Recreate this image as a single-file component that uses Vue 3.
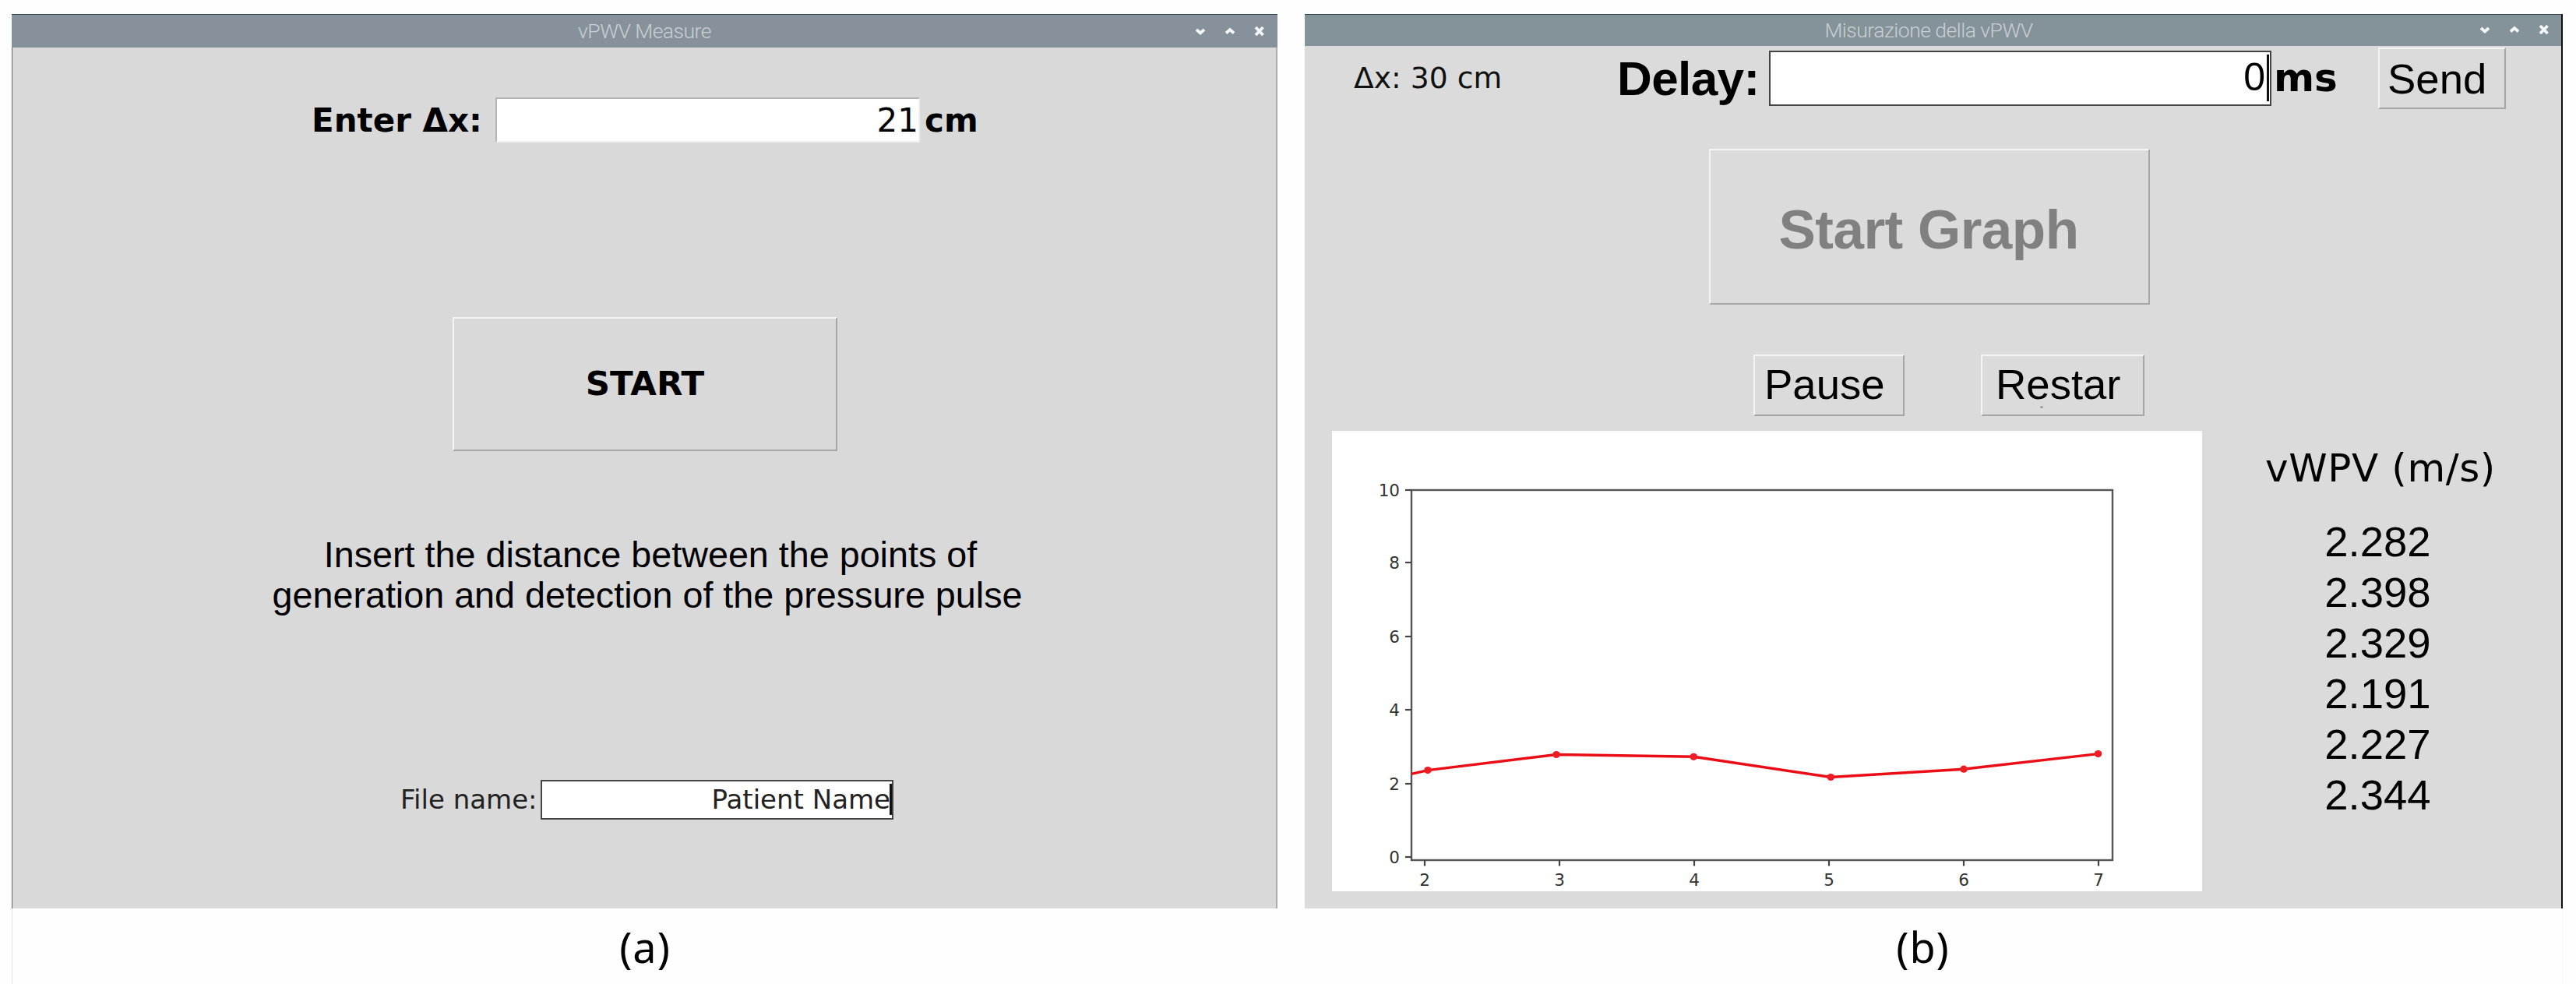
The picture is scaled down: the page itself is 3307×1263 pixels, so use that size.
<script setup>
const readings = ['2.282', '2.398', '2.329', '2.191', '2.227', '2.344']

const yTicks = [
  { label: '10', y: 76 },
  { label: '8', y: 169 },
  { label: '6', y: 264 },
  { label: '4', y: 358 },
  { label: '2', y: 453 },
  { label: '0', y: 547 }
]

const xTicks = [
  { label: '2', x: 119 },
  { label: '3', x: 292 },
  { label: '4', x: 465 },
  { label: '5', x: 638 },
  { label: '6', x: 811 },
  { label: '7', x: 984 }
]

const points = [
  [123, 435.6],
  [288, 415.5],
  [464.3, 418.3],
  [640.3, 444.5],
  [811, 434.2],
  [983.5, 414.6]
]
const line = [[102, 440.3], ...points].map((p) => p.join(',')).join(' ')
</script>

<template>
  <main class="page">
    <figure class="panel panel-a">
      <section class="window">
        <header class="titlebar">
          <span class="title">vPWV Measure</span>
          <svg class="controls" width="92" height="16" viewBox="0 0 92 16">
            <path d="M3 6 L8 10.5 L13 6 M41 10.5 L46 6 L51 10.5" />
            <path d="M79 3 L88.5 13 M88.5 3 L79 13" />
          </svg>
        </header>
        <div class="body">
          <div class="distance-row">
            <label class="bold-label">Enter Δx:</label>
            <div class="field sunken">21</div>
            <span class="bold-label unit">cm</span>
          </div>
          <button class="raised start">START</button>
          <p class="hint">
            <span class="hint-first">Insert the distance between the points of</span>
            <span>generation and detection of the pressure pulse</span>
          </p>
          <div class="file-row">
            <label>File name:</label>
            <div class="field focused">Patient Name<i class="caret"></i></div>
          </div>
        </div>
      </section>
      <figcaption>(a)</figcaption>
    </figure>

    <figure class="panel panel-b">
      <section class="window">
        <header class="titlebar">
          <span class="title">Misurazione della vPWV</span>
          <svg class="controls" width="92" height="16" viewBox="0 0 92 16">
            <path d="M3 6 L8 10.5 L13 6 M41 10.5 L46 6 L51 10.5" />
            <path d="M79 3 L88.5 13 M88.5 3 L79 13" />
          </svg>
        </header>
        <div class="body">
          <div class="delay-row">
            <span class="dx">Δx: 30 cm</span>
            <label class="delay">Delay:</label>
            <div class="field focused delay-field">0<i class="caret"></i></div>
            <span class="ms">ms</span>
            <button class="raised send">Send</button>
          </div>
          <button class="raised graph">Start Graph</button>
          <div class="actions">
            <button class="raised pause">Pause</button>
            <button class="raised restart">Restar<i class="speck"></i></button>
          </div>
          <div class="results">
            <svg class="chart" width="1117" height="591" viewBox="0 0 1117 591">
              <rect class="frame" x="102" y="76" width="900" height="475" />
              <g v-for="t in yTicks" :key="'y' + t.label">
                <line class="tick" x1="94" x2="102" :y1="t.y" :y2="t.y" />
                <text x="87" :y="t.y + 8" text-anchor="end">{{ t.label }}</text>
              </g>
              <g v-for="t in xTicks" :key="'x' + t.label">
                <line class="tick" :x1="t.x" :x2="t.x" y1="551" y2="558.5" />
                <text :x="t.x" y="584" text-anchor="middle">{{ t.label }}</text>
              </g>
              <polyline class="series" :points="line" />
              <ellipse
                v-for="p in points"
                :key="p[0]"
                class="dot"
                :cx="p[0]"
                :cy="p[1]"
                rx="4.8"
                ry="4.6"
              />
            </svg>
            <div class="readings">
              <h2>vWPV (m/s)</h2>
              <ul>
                <li v-for="r in readings" :key="r">{{ r }}</li>
              </ul>
            </div>
          </div>
        </div>
      </section>
      <figcaption>(b)</figcaption>
    </figure>
  </main>
</template>

<style>
body {
  margin: 0;
  background: #fff;
}
</style>

<style scoped>
* {
  box-sizing: border-box;
}
.page {
  display: flex;
  gap: 35px;
  width: 3307px;
  height: 1263px;
  padding: 18px 0 0 15px;
  overflow: hidden;
  background: #fefefe;
  color: #000;
  font-family: "DejaVu Sans", sans-serif;
  white-space: nowrap;
}
.panel {
  display: flex;
  flex-direction: column;
  margin: 0;
}
.panel-a {
  width: 1625px;
}
.panel-b {
  width: 1615px;
}
.window {
  height: 1149px;
  background: #d9d9d9;
}
.panel-a .window {
  border-left: 1px solid #5f666b;
  border-right: 2px solid #acacac;
}
.panel-b .window {
  height: 1148px;
  background: #dbdbdb;
  border-right: 2px solid #0c0f11;
}
figcaption {
  height: 97px;
  padding-top: 3px;
  line-height: 92px;
  font-family: "Noto Sans", sans-serif;
  font-size: 54px;
  letter-spacing: 1px;
  text-align: center;
}
.panel-a figcaption {
  border-left: 1px solid #e2e2e2;
}
.panel-b figcaption {
  padding-right: 27px;
  border-right: 1px solid #f6f6f6;
}

/* title bars */
.titlebar {
  display: grid;
  grid-template-columns: 1fr auto 1fr;
  align-items: center;
  height: 43px;
  border-top: 1px solid #34434c;
  background: #87919b;
}
.panel-a .titlebar {
  margin: 0 -2px 0 -1px;
}
.panel-b .titlebar {
  height: 41px;
  background: #849299;
}
.title {
  grid-column: 2;
  color: #c9cfd3;
  font-family: Roboto, sans-serif;
  font-size: 26.5px;
  font-weight: 300;
  letter-spacing: -0.5px;
  line-height: 40px;
}
.panel-b .title {
  margin-right: 11px;
}
.controls {
  justify-self: end;
  margin-right: 15px;
  fill: none;
  stroke: #f4f6f7;
  stroke-width: 3.8;
}
.panel-b .controls {
  margin-right: 14px;
  margin-top: -2px;
}

/* shared widgets */
button {
  margin: 0;
  padding: 0;
  background: transparent;
  color: #000;
  font-family: inherit;
}
.raised {
  border: 2px solid;
  border-color: #f4f4f4 #a6a6a6 #a6a6a6 #f4f4f4;
}
.field {
  display: flex;
  align-items: center;
  justify-content: flex-end;
  position: relative;
  background: #fff;
}
.sunken {
  border: 2px solid;
  border-color: #b4b4b4 #efefef #efefef #b4b4b4;
}
.focused {
  border: 2.5px solid #444;
}
.caret {
  position: absolute;
  background: #111;
}

/* left window */
.distance-row {
  display: flex;
  align-items: center;
  height: 58px;
  margin: 64px 0 0 384px;
  font-size: 42px;
}
.bold-label {
  width: 236px;
  font-weight: 700;
}
.distance-row .field {
  width: 545px;
  height: 58px;
}
.bold-label.unit {
  width: auto;
  margin-left: 6px;
}
.start {
  display: block;
  width: 494px;
  height: 172px;
  margin: 224px 0 0 565px;
  padding-bottom: 2px;
  font-size: 43.5px;
  font-weight: 700;
}
.hint {
  display: flex;
  flex-direction: column;
  align-items: center;
  width: 1630px;
  margin: 107px 0 0;
  font-family: "Liberation Sans", sans-serif;
  font-size: 46.7px;
  line-height: 52px;
}
.hint-first {
  padding-left: 8px;
}
.file-row {
  display: flex;
  align-items: center;
  height: 51px;
  margin: 211px 0 0 498px;
  color: #222;
  font-size: 34px;
}
.file-row label {
  width: 180px;
  padding-bottom: 2px;
}
.file-row .field {
  width: 453px;
  height: 51px;
  padding: 0 2px 2px 0;
}
.file-row .caret {
  top: 3px;
  right: 0;
  width: 3px;
  height: 40px;
}

/* right window */
.delay-row {
  display: flex;
  align-items: center;
  height: 82px;
  padding-left: 63px;
}
.dx {
  width: 338px;
  color: #111;
  font-size: 37.7px;
}
.delay {
  width: 195px;
  font-family: "Liberation Sans", sans-serif;
  font-size: 62px;
  font-weight: 700;
  letter-spacing: -0.6px;
}
.delay-field {
  width: 645px;
  height: 71px;
  padding: 0 6px 2px 0;
  font-family: "Liberation Sans", sans-serif;
  font-size: 50px;
}
.delay-field .caret {
  top: 3px;
  right: 1px;
  width: 3px;
  height: 60px;
}
.ms {
  width: 135px;
  padding-left: 3px;
  font-size: 50px;
  font-weight: 700;
}
.send,
.pause,
.restart {
  height: 79px;
  padding-bottom: 2px;
  font-family: "Liberation Sans", sans-serif;
  font-size: 54.5px;
  text-align: left;
}
.send {
  width: 164px;
  margin-left: 2px;
  padding: 3px 0 0 10px;
}
.graph {
  display: block;
  width: 566px;
  height: 200px;
  margin: 50px 0 0 519px;
  padding: 7px 2px 0 0;
  color: #808080;
  font-family: "Liberation Sans", sans-serif;
  font-size: 71px;
  font-weight: 700;
  letter-spacing: -0.5px;
}
.actions {
  display: flex;
  gap: 98px;
  margin: 64px 0 0 576px;
}
.pause {
  width: 194px;
  padding-left: 12px;
}
.restart {
  position: relative;
  width: 210px;
  padding-left: 17px;
}
.speck {
  position: absolute;
  left: 74px;
  bottom: 8px;
  width: 4px;
  height: 3px;
  border-radius: 50%;
  background: #999;
}
.results {
  display: flex;
  margin: 19px 0 0 35px;
}
.chart {
  flex: none;
  background: #fff;
}
.chart text {
  fill: #333;
  font-size: 21.5px;
}
.frame {
  fill: none;
  stroke: #555;
  stroke-width: 2.4;
}
.tick {
  stroke: #444;
  stroke-width: 2.2;
}
.series {
  fill: none;
  stroke: #ea0d15;
  stroke-width: 3.4;
}
.dot {
  fill: #ee1c24;
}
.readings {
  width: 458px;
  text-align: center;
}
h2 {
  height: 60px;
  margin: 18px 0 0;
  font-size: 50px;
  font-weight: 400;
  letter-spacing: 0.6px;
  line-height: 60px;
}
ul {
  margin: 32px 0 0;
  padding: 0 7px 0 0;
  list-style: none;
  font-family: "Liberation Sans", sans-serif;
  font-size: 54.5px;
  line-height: 65px;
}
</style>
